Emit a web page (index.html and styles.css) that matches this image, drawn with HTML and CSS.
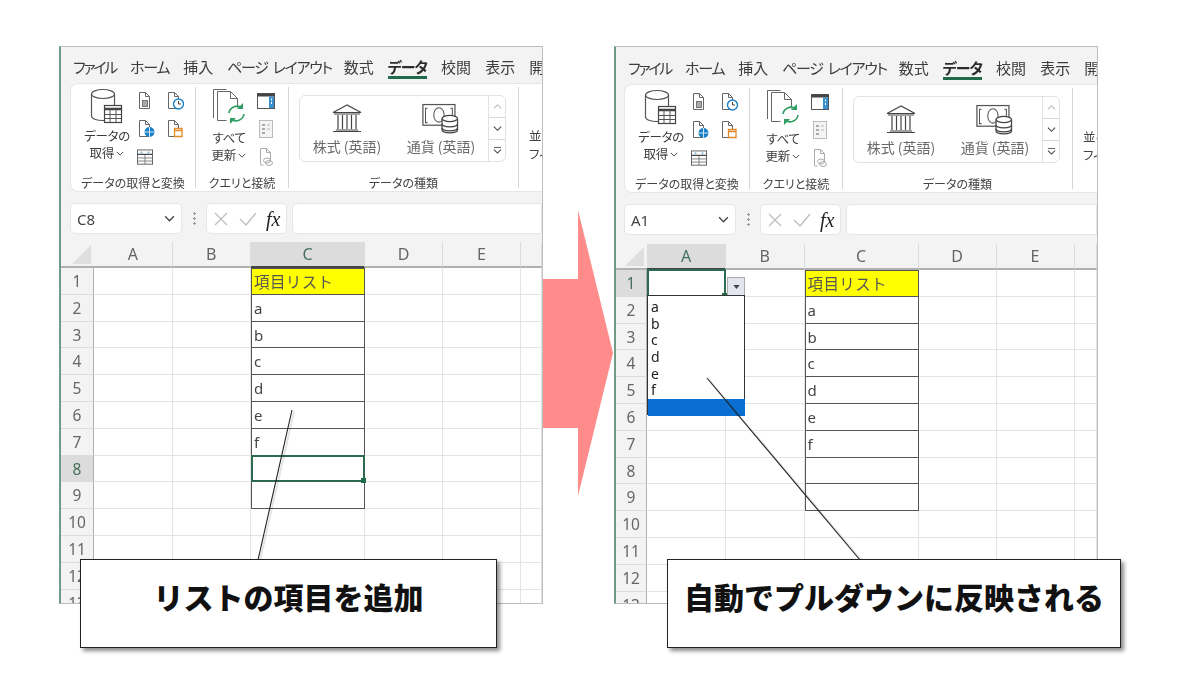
FILE: index.html
```html
<!DOCTYPE html>
<html lang="ja">
<head>
<meta charset="utf-8">
<title>プルダウンリスト</title>
<link rel="stylesheet" href="styles.css">
</head>
<body>
<svg class="defs" aria-hidden="true">
  <symbol id="doc" viewBox="0 0 18 18"><path d="M1.500 .5h6l4 4v12h-10z" fill="#fff" stroke="#666"/><path d="M7.500 .5v4h4" fill="none" stroke="#666"/></symbol>
  <symbol id="db" viewBox="0 0 36 36">
    <path d="M2.500 6v22c0 2.500 5 4.500 11.500 4.500s11.500-2 11.500-4.500V6" fill="#fff" stroke="#555" stroke-width="1.200"/>
    <ellipse cx="14" cy="6" rx="11.500" ry="4.500" fill="#fff" stroke="#555" stroke-width="1.200"/>
    <rect x="15.500" y="17.500" width="17" height="17" fill="#fff" stroke="#444" stroke-width="1.200"/>
    <path d="M15.500 21h17" stroke="#444" stroke-width="2.500"/><path d="M15.500 26.500h17M15.500 30.500h17M21 21v13M27 21v13" stroke="#555"/>
  </symbol>
  <symbol id="d-table" viewBox="0 0 18 18"><use href="#doc"/><rect x="4.500" y="8.500" width="5" height="6" fill="#aaa" stroke="#777"/></symbol>
  <symbol id="d-clock" viewBox="0 0 18 18"><use href="#doc"/><circle cx="11.500" cy="12" r="5" fill="#fff" stroke="#1a7fc4" stroke-width="1.400"/><path d="M11.500 9v3h2.500" fill="none" stroke="#444"/></symbol>
  <symbol id="d-globe" viewBox="0 0 18 18"><use href="#doc"/><circle cx="11.500" cy="12" r="5" fill="#1a7fc4"/><path d="M6.500 12h10M11.500 7v10" stroke="#fff" stroke-width=".8"/></symbol>
  <symbol id="d-cyl" viewBox="0 0 18 18"><use href="#doc"/><path d="M7.500 8.500h7.500v8h-7.500z" fill="#fff" stroke="#e08a2a" stroke-width="1.300"/><path d="M7.500 10.500h7.500" stroke="#e08a2a" stroke-width="1.300"/></symbol>
  <symbol id="tbl" viewBox="0 0 18 18"><rect x=".5" y=".5" width="17" height="16" fill="#fff" stroke="#555"/><path d="M.5 5.500h17" stroke="#444" stroke-width="1.600"/><path d="M.5 9.500h17M.5 13h17M9 5.500v11" stroke="#777"/><path d="M4 3h2M12 3h2" stroke="#1a7fc4"/></symbol>
  <symbol id="refresh" viewBox="0 0 34 36">
    <path d="M1.500 30V1.500h13" fill="none" stroke="#666"/>
    <path d="M5.500 32.500v-29h13l7 7v9M5.500 32.500h9" fill="#fff" stroke="#666"/><path d="M18.500 3.500v7h7" fill="none" stroke="#666"/>
    <path d="M17 25a8 8 0 0 1 13-5" fill="none" stroke="#2f9e63" stroke-width="1.700"/><path d="M31 15v6h-6z" fill="#2f9e63"/>
    <path d="M32 26a8 8 0 0 1-13 5" fill="none" stroke="#2f9e63" stroke-width="1.700"/><path d="M18 36v-6h6z" fill="#2f9e63"/>
  </symbol>
  <symbol id="pane" viewBox="0 0 18 18"><rect x=".5" y="1.500" width="17" height="15" fill="#fff" stroke="#555"/><path d="M.5 3h17" stroke="#444" stroke-width="3"/><rect x="12" y="4.500" width="5" height="11.500" fill="#3a8fd0"/><path d="M14.500 6.500v7" stroke="#fff" stroke-dasharray="2 1.500"/></symbol>
  <symbol id="list" viewBox="0 0 18 18"><rect x="2.500" y=".5" width="13" height="17" fill="#f4f4f4" stroke="#bbb"/><path d="M5 5h3M5 9h3M5 13h3" stroke="#aaa" stroke-width="2"/><path d="M10 5h3M10 9h3" stroke="#bbb"/></symbol>
  <symbol id="link" viewBox="0 0 18 18"><path d="M3.500 .5h6l4 4v8M3.500 16.500v-16M3.500 17h3" fill="none" stroke="#aaa"/><path d="M9.500 .5v4h4" fill="none" stroke="#aaa"/><ellipse cx="10" cy="12.500" rx="3.500" ry="2.500" fill="none" stroke="#aaa"/><ellipse cx="12" cy="15" rx="3.500" ry="2.500" fill="none" stroke="#aaa"/></symbol>
  <symbol id="bank" viewBox="0 0 32 28"><path d="M16 1 2 8.500h28z" fill="#fff" stroke="#444" stroke-width="1.200"/><path d="M3 10h26M5 26h22M2 27.500h28" stroke="#444" stroke-width="1.200"/><path d="M7 11v14M11.500 11v14M16 11v14M20.500 11v14M25 11v14" stroke="#444" stroke-width="1.200"/></symbol>
  <symbol id="money" viewBox="0 0 36 30"><rect x=".5" y="1.500" width="31" height="20" fill="#fff" stroke="#555" stroke-width="1.200"/><path d="M5 5h-2v14h2M27 5h2v14h-2" fill="none" stroke="#555"/><ellipse cx="16" cy="11.500" rx="5" ry="7" fill="#fff" stroke="#555"/>
    <path d="M19 15v11c0 2 3 3 7.500 3s7.500-1 7.500-3V15" fill="#fff" stroke="#444" stroke-width="1.200"/><ellipse cx="26.500" cy="15" rx="7.500" ry="3" fill="#fff" stroke="#444" stroke-width="1.200"/><path d="M19 20c0 2 3 3 7.500 3s7.500-1 7.500-3M19 24c0 2 3 3 7.500 3s7.500-1 7.500-3" fill="none" stroke="#444" stroke-width="1.200"/></symbol>
  <symbol id="chev" viewBox="0 0 10 6"><path d="M1 1l4 4 4-4" fill="none" stroke="#444" stroke-width="1.200"/></symbol>
  <symbol id="up" viewBox="0 0 10 6"><path d="M1 5l4-4 4 4" fill="none" stroke="#bbb" stroke-width="1.200"/></symbol>
  <symbol id="more" viewBox="0 0 10 8"><path d="M1 .5h8" stroke="#444"/><path d="M1 3l4 4 4-4" fill="none" stroke="#444" stroke-width="1.200"/></symbol>
  <symbol id="cross" viewBox="0 0 14 14"><path d="M1 1l12 12M13 1L1 13" fill="none" stroke="#bdbdbd" stroke-width="1.300"/></symbol>
  <symbol id="tick" viewBox="0 0 18 14"><path d="M1 7l6 6L17 1" fill="none" stroke="#bdbdbd" stroke-width="1.300"/></symbol>
</svg>

<main class="stage">
  <section class="win">
    <nav class="tabs"><span class="ka">ファイル</span><span class="kb">ホーム</span><span>挿入</span><span class="kc">ページ レイアウト</span><span>数式</span><span class="on">データ</span><span>校閲</span><span>表示</span><span>開発</span></nav>
    <div class="ribbon">
      <div class="grp g1">
        <div class="body">
          <div class="big"><svg class="bi"><use href="#db"/></svg><span>データの</span><span>取得 <svg class="ch"><use href="#chev"/></svg></span></div>
          <div class="smalls s2">
            <svg><use href="#d-table"/></svg><svg><use href="#d-clock"/></svg>
            <svg><use href="#d-globe"/></svg><svg><use href="#d-cyl"/></svg>
            <svg><use href="#tbl"/></svg>
          </div>
        </div>
        <div class="lab">データの取得と変換</div>
      </div>
      <div class="grp g2">
        <div class="body">
          <div class="big"><svg class="bi"><use href="#refresh"/></svg><span class="lo">すべて</span><span>更新 <svg class="ch"><use href="#chev"/></svg></span></div>
          <div class="smalls"><svg><use href="#pane"/></svg><svg><use href="#list"/></svg><svg><use href="#link"/></svg></div>
        </div>
        <div class="lab">クエリと接続</div>
      </div>
      <div class="grp g3">
        <div class="body">
          <div class="gallery">
            <div class="gi"><svg class="i-bank"><use href="#bank"/></svg><span>株式 (英語)</span></div>
            <div class="gi"><svg class="i-money"><use href="#money"/></svg><span>通貨 (英語)</span></div>
            <div class="scroll"><b><svg><use href="#up"/></svg></b><b><svg><use href="#chev"/></svg></b><b><svg><use href="#more"/></svg></b></div>
          </div>
        </div>
        <div class="lab">データの種類</div>
      </div>
      <div class="g4"><span>並べ替えと</span><span>フィルター</span></div>
    </div>
    <div class="fbar">
      <div class="name"><span>C8</span><svg><use href="#chev"/></svg></div>
      <div class="dots"></div>
      <div class="fx"><svg class="x"><use href="#cross"/></svg><svg class="v"><use href="#tick"/></svg><i>fx</i></div>
      <div class="input"></div>
    </div>
    <div class="sheet">
      <div class="corner"></div><div class="h">A</div><div class="h">B</div><div class="h sel">C</div><div class="h">D</div><div class="h">E</div><div class="h"></div>
      <div class="r">1</div><div class="c"></div><div class="c"></div><div class="c l t y">項目リスト</div><div class="c"></div><div class="c"></div><div class="c"></div>
      <div class="r">2</div><div class="c"></div><div class="c"></div><div class="c l">a</div><div class="c"></div><div class="c"></div><div class="c"></div>
      <div class="r">3</div><div class="c"></div><div class="c"></div><div class="c l">b</div><div class="c"></div><div class="c"></div><div class="c"></div>
      <div class="r">4</div><div class="c"></div><div class="c"></div><div class="c l">c</div><div class="c"></div><div class="c"></div><div class="c"></div>
      <div class="r">5</div><div class="c"></div><div class="c"></div><div class="c l">d</div><div class="c"></div><div class="c"></div><div class="c"></div>
      <div class="r">6</div><div class="c"></div><div class="c"></div><div class="c l">e</div><div class="c"></div><div class="c"></div><div class="c"></div>
      <div class="r">7</div><div class="c"></div><div class="c"></div><div class="c l">f</div><div class="c"></div><div class="c"></div><div class="c"></div>
      <div class="r sel">8</div><div class="c"></div><div class="c"></div><div class="c l active"><em class="handle"></em></div><div class="c"></div><div class="c"></div><div class="c"></div>
      <div class="r">9</div><div class="c"></div><div class="c"></div><div class="c l"></div><div class="c"></div><div class="c"></div><div class="c"></div>
      <div class="r">10</div><div class="c"></div><div class="c"></div><div class="c"></div><div class="c"></div><div class="c"></div><div class="c"></div>
      <div class="r">11</div><div class="c"></div><div class="c"></div><div class="c"></div><div class="c"></div><div class="c"></div><div class="c"></div>
      <div class="r">12</div><div class="c"></div><div class="c"></div><div class="c"></div><div class="c"></div><div class="c"></div><div class="c"></div>
      <div class="r">13</div><div class="c"></div><div class="c"></div><div class="c"></div><div class="c"></div><div class="c"></div><div class="c"></div>
    </div>
  </section>

  <section class="win win-r">
    <nav class="tabs"><span class="ka">ファイル</span><span class="kb">ホーム</span><span>挿入</span><span class="kc">ページ レイアウト</span><span>数式</span><span class="on">データ</span><span>校閲</span><span>表示</span><span>開発</span></nav>
    <div class="ribbon">
      <div class="grp g1">
        <div class="body">
          <div class="big"><svg class="bi"><use href="#db"/></svg><span>データの</span><span>取得 <svg class="ch"><use href="#chev"/></svg></span></div>
          <div class="smalls s2">
            <svg><use href="#d-table"/></svg><svg><use href="#d-clock"/></svg>
            <svg><use href="#d-globe"/></svg><svg><use href="#d-cyl"/></svg>
            <svg><use href="#tbl"/></svg>
          </div>
        </div>
        <div class="lab">データの取得と変換</div>
      </div>
      <div class="grp g2">
        <div class="body">
          <div class="big"><svg class="bi"><use href="#refresh"/></svg><span class="lo">すべて</span><span>更新 <svg class="ch"><use href="#chev"/></svg></span></div>
          <div class="smalls"><svg><use href="#pane"/></svg><svg><use href="#list"/></svg><svg><use href="#link"/></svg></div>
        </div>
        <div class="lab">クエリと接続</div>
      </div>
      <div class="grp g3">
        <div class="body">
          <div class="gallery">
            <div class="gi"><svg class="i-bank"><use href="#bank"/></svg><span>株式 (英語)</span></div>
            <div class="gi"><svg class="i-money"><use href="#money"/></svg><span>通貨 (英語)</span></div>
            <div class="scroll"><b><svg><use href="#up"/></svg></b><b><svg><use href="#chev"/></svg></b><b><svg><use href="#more"/></svg></b></div>
          </div>
        </div>
        <div class="lab">データの種類</div>
      </div>
      <div class="g4"><span>並べ替えと</span><span>フィルター</span></div>
    </div>
    <div class="fbar">
      <div class="name"><span>A1</span><svg><use href="#chev"/></svg></div>
      <div class="dots"></div>
      <div class="fx"><svg class="x"><use href="#cross"/></svg><svg class="v"><use href="#tick"/></svg><i>fx</i></div>
      <div class="input"></div>
    </div>
    <div class="sheet">
      <div class="corner"></div><div class="h sel">A</div><div class="h">B</div><div class="h">C</div><div class="h">D</div><div class="h">E</div><div class="h"></div>
      <div class="r sel">1</div><div class="c active">
        <em class="handle"></em>
        <div class="dd-btn"><svg viewBox="0 0 8 5"><path d="M0 0h8L4 5z" fill="#444"/></svg></div>
        <ul class="dd"><li>a</li><li>b</li><li>c</li><li>d</li><li>e</li><li>f</li><li class="hl"></li></ul>
      </div><div class="c"></div><div class="c l t y">項目リスト</div><div class="c"></div><div class="c"></div><div class="c"></div>
      <div class="r">2</div><div class="c"></div><div class="c"></div><div class="c l">a</div><div class="c"></div><div class="c"></div><div class="c"></div>
      <div class="r">3</div><div class="c"></div><div class="c"></div><div class="c l">b</div><div class="c"></div><div class="c"></div><div class="c"></div>
      <div class="r">4</div><div class="c"></div><div class="c"></div><div class="c l">c</div><div class="c"></div><div class="c"></div><div class="c"></div>
      <div class="r">5</div><div class="c"></div><div class="c"></div><div class="c l">d</div><div class="c"></div><div class="c"></div><div class="c"></div>
      <div class="r">6</div><div class="c"></div><div class="c"></div><div class="c l">e</div><div class="c"></div><div class="c"></div><div class="c"></div>
      <div class="r">7</div><div class="c"></div><div class="c"></div><div class="c l">f</div><div class="c"></div><div class="c"></div><div class="c"></div>
      <div class="r">8</div><div class="c"></div><div class="c"></div><div class="c l"></div><div class="c"></div><div class="c"></div><div class="c"></div>
      <div class="r">9</div><div class="c"></div><div class="c"></div><div class="c l"></div><div class="c"></div><div class="c"></div><div class="c"></div>
      <div class="r">10</div><div class="c"></div><div class="c"></div><div class="c"></div><div class="c"></div><div class="c"></div><div class="c"></div>
      <div class="r">11</div><div class="c"></div><div class="c"></div><div class="c"></div><div class="c"></div><div class="c"></div><div class="c"></div>
      <div class="r">12</div><div class="c"></div><div class="c"></div><div class="c"></div><div class="c"></div><div class="c"></div><div class="c"></div>
      <div class="r">13</div><div class="c"></div><div class="c"></div><div class="c"></div><div class="c"></div><div class="c"></div><div class="c"></div>
    </div>
  </section>

  <svg class="overlay" viewBox="0 0 1200 675" aria-hidden="true">
    <polygon class="arrow" points="543,279 578,279 578,210 613,353 578,496 578,428 543,428"/>
    <line class="sh" x1="294" y1="412" x2="260" y2="560"/>
    <line class="ln" x1="292" y1="410" x2="258" y2="560"/>
    <line class="sh" x1="709" y1="380" x2="862" y2="561"/>
    <line class="ln" x1="707" y1="378" x2="860" y2="560"/>
  </svg>
  <div class="callout c-left">リストの項目を追加</div>
  <div class="callout c-right">自動でプルダウンに反映される</div>
</main>
</body>
</html>
```
FILE: styles.css
```css
* { box-sizing: border-box; }
html, body { margin: 0; padding: 0; background: #fff; }
body { font-family: "Noto Sans CJK JP", "Noto Sans", sans-serif; color: #444; }
.defs { position: absolute; width: 0; height: 0; }

.stage { position: relative; width: 1200px; height: 675px; overflow: hidden; display: flex; gap: 71px; padding: 46px 0 0 59px; align-items: flex-start; }

.win { width: 484px; height: 558px; flex: none; overflow: hidden; background: #f3f3f3; border: 1px solid #bdbdbd; border-left: 2px solid #6f9c86; display: flex; flex-direction: column; filter: blur(.3px); }

.tabs { height: 36px; flex: none; display: flex; align-items: center; gap: 14px; padding: 3px 0 0 12px; font-size: 15px; line-height: 20px; font-feature-settings: "palt"; color: #3c3c3c; white-space: nowrap; }
.tabs .ka { letter-spacing: -2.200px; }
.tabs .kb { letter-spacing: -1.300px; }
.tabs .kc { letter-spacing: -1.300px; word-spacing: 3px; margin-right: -2px; }
.tabs .on { font-weight: 700; color: #2b2b2b; position: relative; letter-spacing: -1px; }
.tabs .on::after { content: ""; position: absolute; left: 0; right: 0; bottom: -2px; height: 3px; background: #1f6b4b; }

.ribbon { height: 109px; flex: none; margin-left: 9px; background: #fff; border-radius: 8px 0 0 8px; display: flex; overflow: hidden; border: 1px solid #e6e6e6; border-right: 0; }
.grp { margin: 3px 0; border-right: 1px solid #d6d6d6; display: flex; flex-direction: column; flex: none; }
.body { height: 87px; flex: none; display: flex; }
.lab { height: 14px; font-size: 12px; line-height: 18px; text-align: center; font-feature-settings: "palt"; color: #444; white-space: nowrap; }
.g1 { width: 125px; }
.g2 { width: 93px; }
.g3 { width: 230px; }

.big { display: flex; flex-direction: column; align-items: center; font-size: 12.500px; line-height: 17px; font-feature-settings: "palt"; white-space: nowrap; color: #3c3c3c; letter-spacing: -.3px; }
.bi { width: 36px; height: 36px; margin: 1px 0 3px; flex: none; }
.lo { margin-top: 2px; }
.ch { width: 8px; height: 5px; vertical-align: 2px; }
.g1 .big { width: 58px; margin-left: 7px; }
.g2 .big { width: 66px; flex: none; }
.g2 .bi { margin-left: -1px; }

.smalls { display: grid; grid-template-columns: 18px; grid-auto-rows: 28px; align-items: center; align-self: flex-start; }
.smalls svg { width: 18px; height: 18px; display: block; }
.s2 { grid-template-columns: 18px 18px; column-gap: 11px; margin-left: 2px; }
.s2 svg:last-child { width: 16px; height: 17px; margin-left: -1px; }
.g2 .smalls { margin-left: -5px; }

.gallery { margin: 8px 0 0 10px; width: 207px; height: 67px; border: 1px solid #e2e2e2; border-radius: 6px; display: flex; overflow: hidden; }
.gi { flex: 1; display: flex; flex-direction: column; align-items: center; justify-content: flex-end; font-size: 14px; line-height: 18px; color: #6a6a6a; white-space: nowrap; padding-bottom: 6px; }
.gi:first-child { flex: 0 0 94px; }
.gi:nth-child(2) { flex: 0 0 94px; }
.i-bank { width: 32px; height: 28px; margin-bottom: 5px; }
.i-money { width: 38px; height: 31px; margin-bottom: 3px; }
.scroll { width: 18px; flex: none; margin-left: auto; border-left: 1px solid #e2e2e2; display: flex; flex-direction: column; }
.scroll b { flex: 1; display: flex; align-items: center; justify-content: center; border-bottom: 1px solid #d8d8d8; }
.scroll b:last-child { border-bottom: 0; }
.scroll svg { width: 9px; height: 7px; }

.g4 { flex: none; padding: 43px 0 0 10px; font-size: 12.500px; line-height: 18px; display: flex; flex-direction: column; white-space: nowrap; font-feature-settings: "palt"; }

.fbar { height: 31px; flex: none; margin: 11px 0 0 9px; display: flex; }
.name { width: 112px; background: #fff; border: 1px solid #e6e6e6; border-radius: 5px; display: flex; align-items: center; justify-content: space-between; padding: 0 6px 0 6px; font-family: "Noto Sans", sans-serif; font-size: 15px; color: #444; }
.name svg { width: 11px; height: 7px; }
.dots { width: 24px; flex: none; background: radial-gradient(circle, #999 1px, transparent 1.300px) center / 3px 5px repeat-y; margin: 8px 0; }
.fx { width: 81px; background: #fff; border: 1px solid #e6e6e6; border-radius: 5px; display: flex; align-items: center; padding: 0 0 0 7px; }
.fx .x { width: 14px; height: 14px; flex: none; }
.fx .v { width: 18px; height: 14px; margin-left: 11px; flex: none; }
.fx i { font: italic 400 20px/24px "Liberation Serif", serif; color: #222; margin-left: 9px; }
.input { flex: 1; margin-left: 5px; background: #fff; border: 1px solid #e6e6e6; border-radius: 5px 0 0 5px; }

.sheet { flex: 1; margin-top: 8px; display: grid; grid-template-columns: 33px 78.500px 78.500px 114px 78px 78px 1fr; grid-template-rows: 26px repeat(13, 26.800px); font-family: "Noto Sans", sans-serif; }
.corner { position: relative; border-bottom: 2px solid #b0b0b0; }
.corner::after { content: ""; position: absolute; right: 3px; bottom: 2px; border-style: solid; border-width: 0 0 19px 19px; border-color: transparent transparent #dedede transparent; }
.h { font-size: 16px; line-height: 24px; text-align: center; color: #666; border-right: 1px solid #dcdcdc; border-bottom: 2px solid #b0b0b0; }
.h.sel { background: #dcdcdc; color: #47705c; border-bottom-color: #444; }
.r { font-size: 15.500px; line-height: 26px; text-align: center; color: #666; border-bottom: 1px solid #dcdcdc; border-right: 1px solid #b0b0b0; }
.r.sel { background: #dcdcdc; color: #47705c; }
.c { position: relative; background: #fff; border-right: 1px solid #e4e4e4; border-bottom: 1px solid #e4e4e4; font-size: 15px; line-height: 26px; padding-left: 3px; color: #444; }
.l { border: 1px solid #555; border-top: 0; padding-left: 2px; }
.t { border-top: 1px solid #555; }
.y { background: #ff0; font-family: "Noto Sans CJK JP", sans-serif; font-size: 15.500px; letter-spacing: .4px; line-height: 24px; color: #555; }
.active { border: 2px solid #2d6a4f; margin: -1px 0 0 0; z-index: 2; }
.handle { position: absolute; right: -3px; bottom: -3px; width: 5px; height: 5px; background: #1f6b4b; }

.dd-btn { position: absolute; left: 78px; top: 6px; width: 18px; height: 19px; background: #e3e6ee; border: 1px solid #aaa; display: flex; align-items: center; justify-content: center; }
.dd-btn svg { width: 7px; height: 4px; }
.dd { position: absolute; left: -2px; top: 24px; width: 98px; height: 120px; margin: 0; padding: 3px 0 0 3px; list-style: none; background: #fff; border: 1px solid #333; display: flex; flex-direction: column; z-index: 3; font-family: "Noto Sans", sans-serif; font-size: 14px; line-height: 16.700px; color: #222; }
.dd li { height: 16.700px; flex: none; }
.dd .hl { margin: auto -1px 0 -3px; height: 17px; background: #0a6fd0; }

.overlay { position: absolute; left: 0; top: 0; width: 1200px; height: 675px; z-index: 5; }
.arrow { fill: #ff8b8b; }
.ln { stroke: #222; stroke-width: 1.100; }
.sh { stroke: rgba(0,0,0,.1); stroke-width: 2; }

.callout { position: absolute; top: 559px; height: 89px; z-index: 6; background: #fff; border: 1.500px solid #222; box-shadow: 3px 3px 4px rgba(0,0,0,.45); display: flex; align-items: center; justify-content: center; padding-bottom: 15px; font-size: 30px; font-weight: 900; color: #111; white-space: nowrap; }
.c-left { left: 80px; width: 417px; }
.c-right { left: 667px; width: 454px; }

.win-r .tabs { padding-top: 5px; height: 37px; }
.win-r .ribbon, .win-r .fbar { margin-left: 8px; }
.win-r .sheet { margin-top: 9px; grid-template-columns: 31px 79px 78.500px 114px 78px 78px 1fr; }
```
